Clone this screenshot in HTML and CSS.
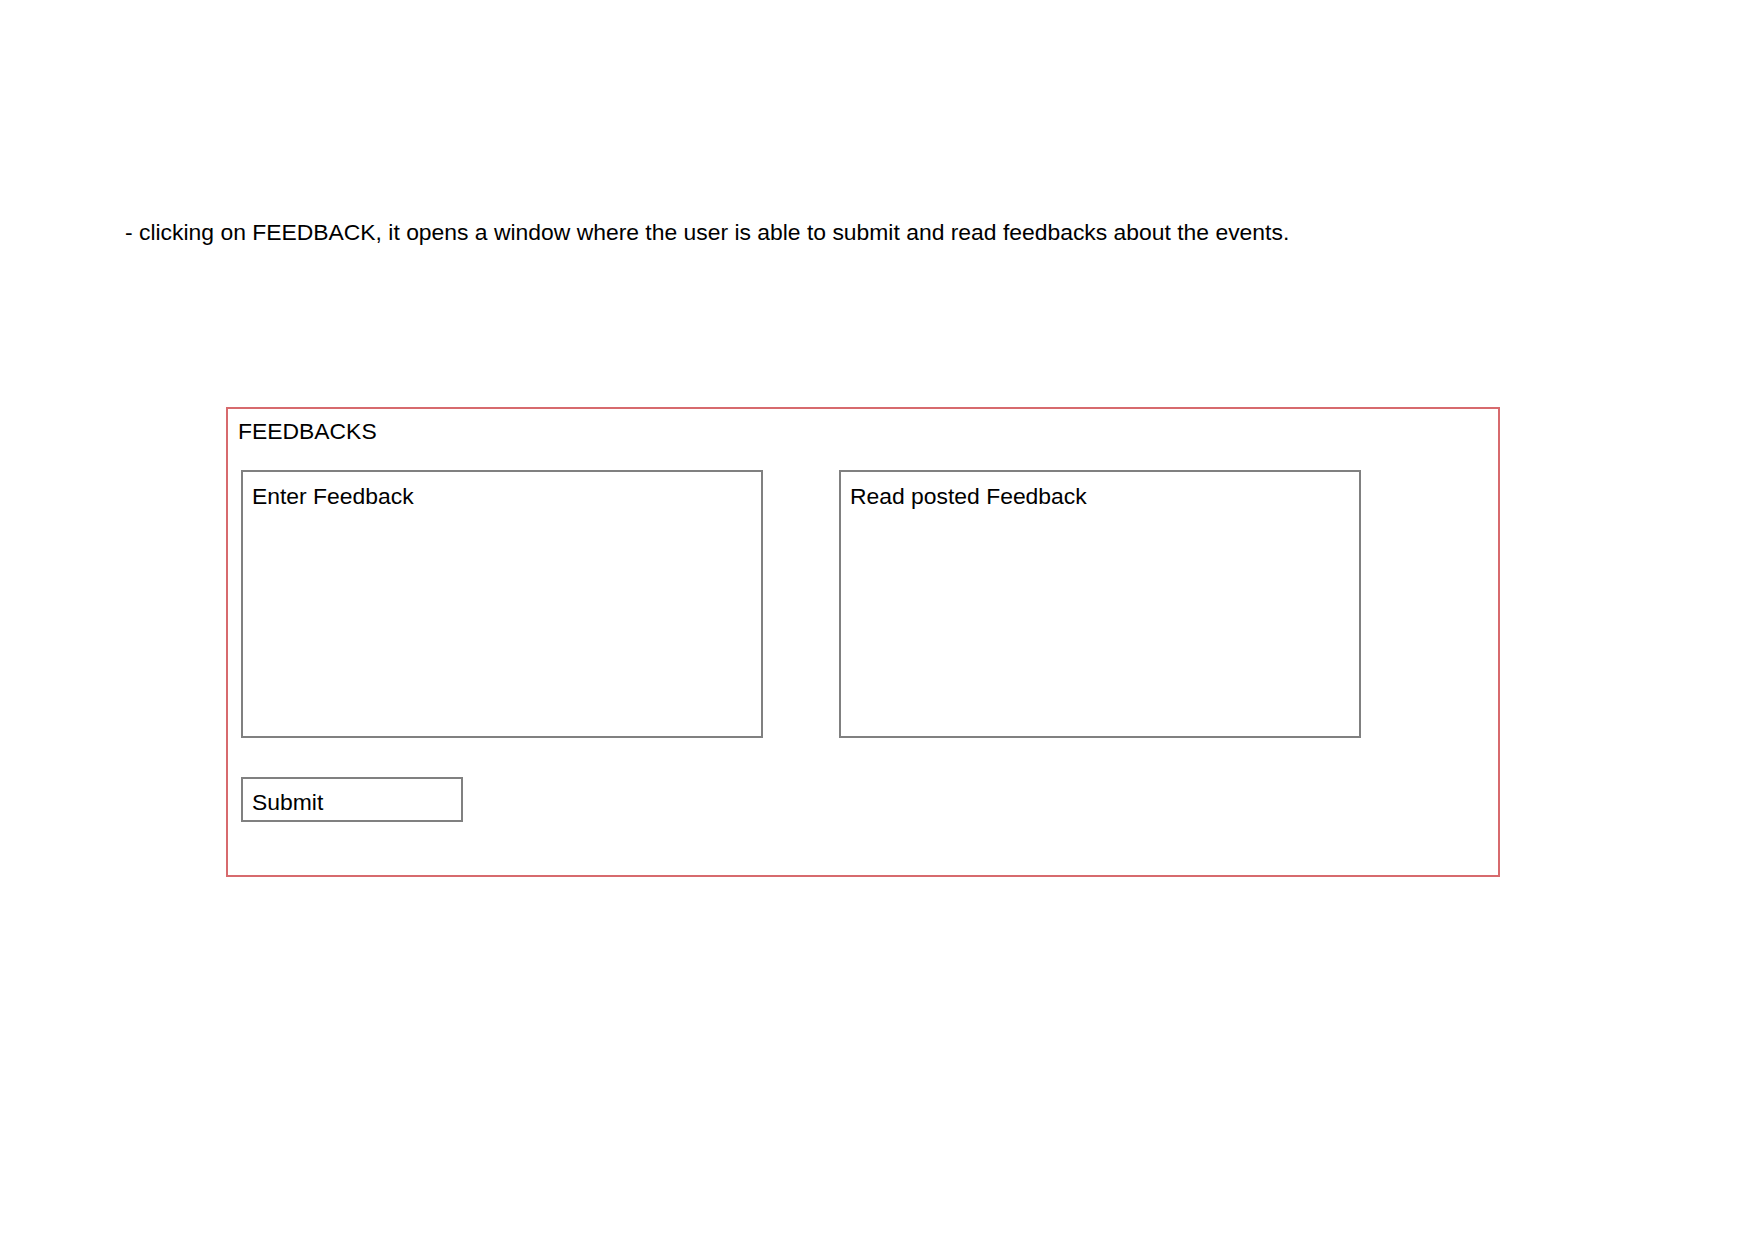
FILE: index.html
```html
<!DOCTYPE html>
<html>
<head>
<meta charset="utf-8">
<link rel="stylesheet" href="styles.css">
</head>
<body>
<div class="page">
  <p class="intro">- clicking on FEEDBACK, it opens a window where the user is able to submit and read feedbacks about the events.</p>
  <section class="panel">
    <div class="panel-title">FEEDBACKS</div>
    <div class="boxes">
      <div class="box">Enter Feedback</div>
      <div class="box">Read posted Feedback</div>
    </div>
    <div class="submit">Submit</div>
  </section>
</div>
</body>
</html>
```
FILE: styles.css
```css
html, body {
  margin: 0;
  padding: 0;
  background: #ffffff;
}
body {
  font-family: "Liberation Sans", Arial, sans-serif;
  font-size: 22.9px;
  line-height: 24px;
  color: #000000;
}
.page {
  padding-top: 220px;
}
.intro {
  margin: 0;
  padding-left: 125px;
}
.panel {
  box-sizing: border-box;
  margin: 163px 0 0 226px;
  width: 1274px;
  height: 470px;
  border: 2px solid #d76a6d;
  padding: 10px 0 0 10px;
}
.panel-title {
  height: 24px;
}
.boxes {
  display: flex;
  gap: 76px;
  margin: 27px 0 0 3px;
}
.box {
  box-sizing: border-box;
  width: 522px;
  height: 268px;
  border: 2px solid #808080;
  padding: 12px 9px;
}
.submit {
  box-sizing: border-box;
  width: 222px;
  height: 45px;
  margin: 39px 0 0 3px;
  border: 2px solid #808080;
  padding: 11px 9px 0;
}
```
